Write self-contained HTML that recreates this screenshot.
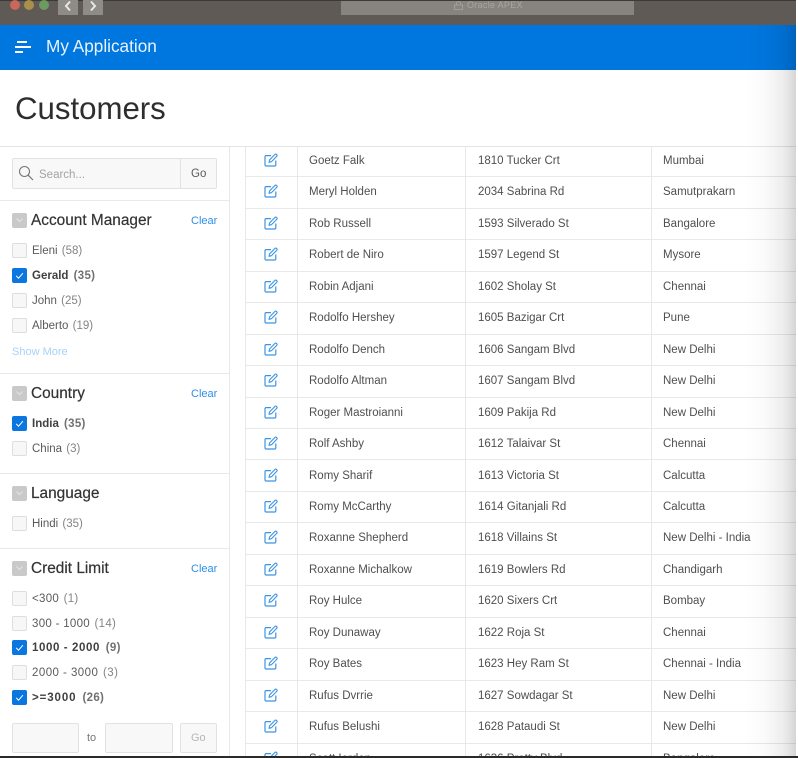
<!DOCTYPE html>
<html><head><meta charset="utf-8"><title>Customers</title>
<style>
*{box-sizing:border-box}
html,body{margin:0;padding:0;background:#fff;width:798px;height:758px;overflow:hidden}
body{position:relative;font-family:"Liberation Sans",sans-serif;color:#404040}
.a{position:absolute;white-space:nowrap}
#wrap{position:absolute;left:0;top:0;width:798px;height:758px;overflow:hidden;filter:blur(.3px)}
.top{left:0;top:0;width:798px;height:25px;background:#5f5a55;border-top:1px solid #3c3a38}
.dot{width:10px;height:10px;border-radius:50%;top:0}
.nav{top:0;width:20px;height:15px;background:#8f8b87}
.hdr{left:0;top:25px;width:798px;height:45px;background:#0076df}
.hb{background:#fff;height:2px}
.row{position:absolute;left:245px;width:551px;height:31.45px;border-bottom:1px solid #e8e8e8;font-size:11.5px;color:#4f4f4f}
.row span{position:absolute;top:8px;line-height:14px;white-space:nowrap}
.row span:nth-of-type(1){left:64px}
.row span:nth-of-type(2){left:233px}
.row span:nth-of-type(3){left:418px}
.row svg{position:absolute;left:18.500px;top:7px}
.v{top:147px;width:1px;height:609px;background:#e8e8e8}
.h{height:1px;background:#e8e8e8;left:0;width:229px}
.cb{left:12px;width:15px;height:15px;background:#f7f7f7;border:1px solid #dedede;border-radius:2px}
.cb.on{background:#0a76e0;border-color:#0a76e0}
.cb.on svg{position:absolute;left:0;top:0}
.lab{left:32px;font-size:11.5px;line-height:14px;color:#5a5a5a}
.lab i{font-style:normal;color:#858585;margin-left:1px}
.lab.b{font-weight:bold;color:#404040}
.lab.b i{color:#707070;margin-left:2px;letter-spacing:.3px}
.ttl{left:31px;font-size:15.4px;line-height:18px;color:#333;-webkit-text-stroke:.2px #333}
.clr{left:191px;font-size:11px;line-height:14px;color:#2f8fe6}
.col{left:12px;width:15px;height:15px;background:#c9c9c9;border-radius:2px}
.col svg{position:absolute;left:2px;top:3px}
.box{background:#f8f8f8;border:1px solid #e2e2e2;border-radius:2px}
</style></head><body>
<svg width="0" height="0" style="position:absolute"><defs>
<symbol id="ed" viewBox="0 0 14 14"><path d="M7 2.600H2.200A1.200 1.200 0 0 0 1 3.800v8a1.200 1.200 0 0 0 1.200 1.200h8.400a1.200 1.200 0 0 0 1.200-1.200V7.500" fill="none" stroke="#3a94e6" stroke-width="1.200"/><path d="M5 9.300l.6-2.400L11 1.400a1 1 0 0 1 1.400 0l.4.4a1 1 0 0 1 0 1.400L7.400 8.700z" fill="none" stroke="#3a94e6" stroke-width="1.100" stroke-linejoin="round"/></symbol>
<symbol id="ck" viewBox="0 0 13 13"><path d="M3.200 6.800l2.300 2.400 4.400-5" fill="none" stroke="#fff" stroke-width="1"/></symbol>
<symbol id="ch" viewBox="0 0 11 9"><path d="M2.500 2.500l3 3 3-3" fill="none" stroke="#e4e4e4" stroke-width="1"/></symbol>
</defs></svg>
<div id="wrap">
<div class="a top"></div>
<div class="a dot" style="left:9.500px;background:#c8675c"></div>
<div class="a dot" style="left:24px;background:#a88f4c"></div>
<div class="a dot" style="left:39px;background:#6d9a60"></div>
<div class="a nav" style="left:58px"></div>
<div class="a nav" style="left:83px"></div>
<svg class="a" style="left:58px;top:0" width="45" height="15"><path d="M12 1.500l-4 4.500 4 4.500M33 1.500l4 4.500-4 4.500" fill="none" stroke="#e8e8e8" stroke-width="2"/></svg>
<div class="a" style="left:341px;top:1px;width:293px;height:14px;background:#878480"></div>
<div class="a" style="left:467px;top:0;font-size:9px;line-height:11px;color:#a8a5a2;letter-spacing:.3px">Oracle APEX</div>
<svg class="a" style="left:453px;top:1px" width="11" height="9"><path d="M1.500 4h8v4.500h-8zM3.500 4V2.500a2 2 0 0 1 4 0V4" fill="none" stroke="#a8a5a2" stroke-width=".8"/></svg>

<div class="a hdr"></div>
<div class="a hb" style="left:17px;top:41px;width:10px"></div>
<div class="a hb" style="left:15px;top:46px;width:16px"></div>
<div class="a hb" style="left:15px;top:51px;width:8px"></div>
<div class="a" style="left:46px;top:36px;font-size:17.2px;line-height:21px;color:#e8f3fd">My Application</div>

<div class="a" style="left:15px;top:91px;font-size:31.2px;line-height:36px;color:#2e2e2e">Customers</div>
<div class="a" style="left:0;top:146px;width:798px;height:1px;background:#e4e4e4"></div>

<div class="a v" style="left:229px"></div>
<div class="a v" style="left:245px"></div>
<div class="a v" style="left:297px"></div>
<div class="a v" style="left:465px"></div>
<div class="a v" style="left:651px"></div>

<div class="row" style="top:146px"><svg width="14" height="14"><use href="#ed"/></svg><span>Goetz Falk</span><span>1810 Tucker Crt</span><span>Mumbai</span></div>
<div class="row" style="top:177.450px"><svg width="14" height="14"><use href="#ed"/></svg><span>Meryl Holden</span><span>2034 Sabrina Rd</span><span>Samutprakarn</span></div>
<div class="row" style="top:208.900px"><svg width="14" height="14"><use href="#ed"/></svg><span>Rob Russell</span><span>1593 Silverado St</span><span>Bangalore</span></div>
<div class="row" style="top:240.350px"><svg width="14" height="14"><use href="#ed"/></svg><span>Robert de Niro</span><span>1597 Legend St</span><span>Mysore</span></div>
<div class="row" style="top:271.800px"><svg width="14" height="14"><use href="#ed"/></svg><span>Robin Adjani</span><span>1602 Sholay St</span><span>Chennai</span></div>
<div class="row" style="top:303.250px"><svg width="14" height="14"><use href="#ed"/></svg><span>Rodolfo Hershey</span><span>1605 Bazigar Crt</span><span>Pune</span></div>
<div class="row" style="top:334.700px"><svg width="14" height="14"><use href="#ed"/></svg><span>Rodolfo Dench</span><span>1606 Sangam Blvd</span><span>New Delhi</span></div>
<div class="row" style="top:366.150px"><svg width="14" height="14"><use href="#ed"/></svg><span>Rodolfo Altman</span><span>1607 Sangam Blvd</span><span>New Delhi</span></div>
<div class="row" style="top:397.600px"><svg width="14" height="14"><use href="#ed"/></svg><span>Roger Mastroianni</span><span>1609 Pakija Rd</span><span>New Delhi</span></div>
<div class="row" style="top:429.050px"><svg width="14" height="14"><use href="#ed"/></svg><span>Rolf Ashby</span><span>1612 Talaivar St</span><span>Chennai</span></div>
<div class="row" style="top:460.500px"><svg width="14" height="14"><use href="#ed"/></svg><span>Romy Sharif</span><span>1613 Victoria St</span><span>Calcutta</span></div>
<div class="row" style="top:491.950px"><svg width="14" height="14"><use href="#ed"/></svg><span>Romy McCarthy</span><span>1614 Gitanjali Rd</span><span>Calcutta</span></div>
<div class="row" style="top:523.400px"><svg width="14" height="14"><use href="#ed"/></svg><span>Roxanne Shepherd</span><span>1618 Villains St</span><span>New Delhi - India</span></div>
<div class="row" style="top:554.850px"><svg width="14" height="14"><use href="#ed"/></svg><span>Roxanne Michalkow</span><span>1619 Bowlers Rd</span><span>Chandigarh</span></div>
<div class="row" style="top:586.300px"><svg width="14" height="14"><use href="#ed"/></svg><span>Roy Hulce</span><span>1620 Sixers Crt</span><span>Bombay</span></div>
<div class="row" style="top:617.750px"><svg width="14" height="14"><use href="#ed"/></svg><span>Roy Dunaway</span><span>1622 Roja St</span><span>Chennai</span></div>
<div class="row" style="top:649.200px"><svg width="14" height="14"><use href="#ed"/></svg><span>Roy Bates</span><span>1623 Hey Ram St</span><span>Chennai - India</span></div>
<div class="row" style="top:680.650px"><svg width="14" height="14"><use href="#ed"/></svg><span>Rufus Dvrrie</span><span>1627 Sowdagar St</span><span>New Delhi</span></div>
<div class="row" style="top:712.100px"><svg width="14" height="14"><use href="#ed"/></svg><span>Rufus Belushi</span><span>1628 Pataudi St</span><span>New Delhi</span></div>
<div class="row" style="top:743.550px;height:12.450px;overflow:hidden;border-bottom:0"><svg width="14" height="14"><use href="#ed"/></svg><span>Scott Iorden</span><span>1636 Pretty Blvd</span><span>Bangalore</span></div>

<!-- sidebar -->
<div class="a box" style="left:12px;top:158px;width:205px;height:31px"></div>
<div class="a" style="left:180px;top:159px;width:1px;height:29px;background:#e2e2e2"></div>
<svg class="a" style="left:18px;top:165px" width="17" height="17"><circle cx="6.500" cy="6.500" r="5" fill="none" stroke="#777" stroke-width="1.100"/><path d="M10.200 10.200l4.800 4.800" stroke="#777" stroke-width="1.200"/></svg>
<div class="a" style="left:39px;top:167.500px;font-size:11.500px;line-height:14px;color:#a3a3a3">Search...</div>
<div class="a" style="left:191px;top:167px;font-size:11.500px;line-height:14px;color:#5a5a5a">Go</div>
<div class="a h" style="top:200px"></div>

<div class="a col" style="top:213px"><svg width="11" height="9"><use href="#ch"/></svg></div>
<div class="a ttl" style="top:212px">Account Manager</div>
<div class="a clr" style="top:213.500px">Clear</div>
<div class="a cb" style="top:243px"></div><div class="a lab" style="top:244px">Eleni <i>(58)</i></div>
<div class="a cb on" style="top:268px"><svg width="13" height="13"><use href="#ck"/></svg></div><div class="a lab b" style="top:269px">Gerald <i>(35)</i></div>
<div class="a cb" style="top:293px"></div><div class="a lab" style="top:294px">John <i>(25)</i></div>
<div class="a cb" style="top:318px"></div><div class="a lab" style="top:319px">Alberto <i>(19)</i></div>
<div class="a" style="left:12px;top:345px;font-size:11px;line-height:14px;color:#a9d1f5">Show More</div>
<div class="a h" style="top:373px"></div>

<div class="a col" style="top:386px"><svg width="11" height="9"><use href="#ch"/></svg></div>
<div class="a ttl" style="top:385px">Country</div>
<div class="a clr" style="top:386.500px">Clear</div>
<div class="a cb on" style="top:416px"><svg width="13" height="13"><use href="#ck"/></svg></div><div class="a lab b" style="top:417px">India <i>(35)</i></div>
<div class="a cb" style="top:441px"></div><div class="a lab" style="top:442px">China <i>(3)</i></div>
<div class="a h" style="top:473px"></div>

<div class="a col" style="top:486px"><svg width="11" height="9"><use href="#ch"/></svg></div>
<div class="a ttl" style="top:485px">Language</div>
<div class="a cb" style="top:516px"></div><div class="a lab" style="top:517px">Hindi <i>(35)</i></div>
<div class="a h" style="top:548px"></div>

<div class="a col" style="top:561px"><svg width="11" height="9"><use href="#ch"/></svg></div>
<div class="a ttl" style="top:560px">Credit Limit</div>
<div class="a clr" style="top:561.500px">Clear</div>
<div class="a cb" style="top:591px"></div><div class="a lab" style="top:592px;letter-spacing:.3px">&lt;300 <i>(1)</i></div>
<div class="a cb" style="top:616px"></div><div class="a lab" style="top:617px;letter-spacing:.3px">300 - 1000 <i>(14)</i></div>
<div class="a cb on" style="top:640px"><svg width="13" height="13"><use href="#ck"/></svg></div><div class="a lab b" style="top:641px;letter-spacing:.6px">1000 - 2000 <i>(9)</i></div>
<div class="a cb" style="top:665px"></div><div class="a lab" style="top:666px;letter-spacing:.45px">2000 - 3000 <i>(3)</i></div>
<div class="a cb on" style="top:690px"><svg width="13" height="13"><use href="#ck"/></svg></div><div class="a lab b" style="top:691px;letter-spacing:.9px">&gt;=3000 <i>(26)</i></div>
<div class="a box" style="left:12px;top:723px;width:67px;height:30px"></div>
<div class="a" style="left:87px;top:731px;font-size:11px;line-height:14px;color:#777">to</div>
<div class="a box" style="left:105px;top:723px;width:68px;height:30px"></div>
<div class="a box" style="left:180px;top:723px;width:37px;height:30px"></div>
<div class="a" style="left:191px;top:731px;font-size:11px;line-height:14px;color:#b5b5b5">Go</div>

<div class="a" style="left:745px;top:25px;width:51px;height:731px;background:linear-gradient(90deg,rgba(0,0,0,0),rgba(0,0,0,.02) 40%,rgba(0,0,0,.07) 75%,rgba(0,0,0,.16))"></div>
<div class="a" style="left:796px;top:0;width:2px;height:758px;background:#fff"></div>
<div class="a" style="left:0;top:756px;width:798px;height:2px;background:#2a2a2a"></div>
</div>
</body></html>
